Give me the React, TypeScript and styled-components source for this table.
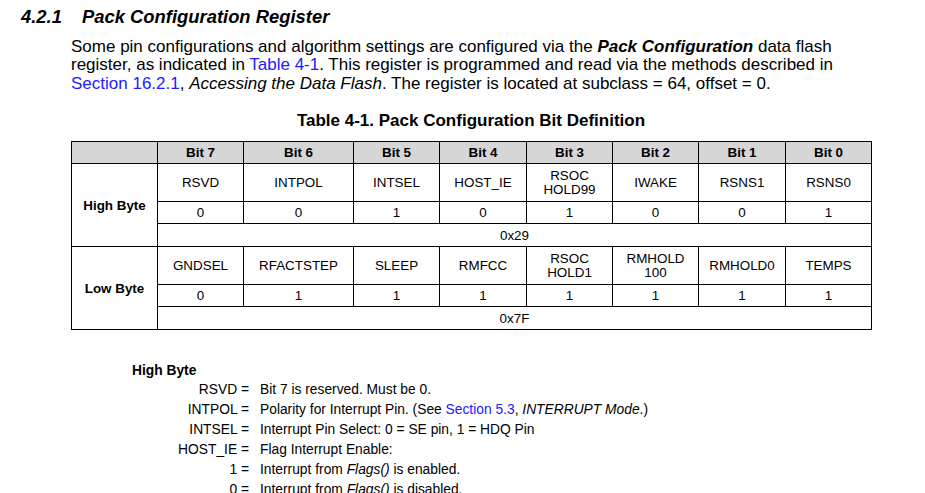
import styled, { createGlobalStyle } from 'styled-components';

const GlobalStyle = createGlobalStyle`
  body {
    margin: 0;
    background: #fff;
    color: #000;
    font-family: "Liberation Sans", Arial, sans-serif;
  }
`;

interface BitCell {
  name: string[];
  value: number;
}

interface ByteRow {
  label: string;
  bits: BitCell[];
  hex: string;
}

const bytes: ByteRow[] = [
  {
    label: 'High Byte',
    hex: '0x29',
    bits: [
      { name: ['RSVD'], value: 0 },
      { name: ['INTPOL'], value: 0 },
      { name: ['INTSEL'], value: 1 },
      { name: ['HOST_IE'], value: 0 },
      { name: ['RSOC', 'HOLD99'], value: 1 },
      { name: ['IWAKE'], value: 0 },
      { name: ['RSNS1'], value: 0 },
      { name: ['RSNS0'], value: 1 },
    ],
  },
  {
    label: 'Low Byte',
    hex: '0x7F',
    bits: [
      { name: ['GNDSEL'], value: 0 },
      { name: ['RFACTSTEP'], value: 1 },
      { name: ['SLEEP'], value: 1 },
      { name: ['RMFCC'], value: 1 },
      { name: ['RSOC', 'HOLD1'], value: 1 },
      { name: ['RMHOLD', '100'], value: 1 },
      { name: ['RMHOLD0'], value: 1 },
      { name: ['TEMPS'], value: 1 },
    ],
  },
];

const colWidths = [86, 86, 110, 86, 87, 86, 86, 87, 86];

export default function App() {
  return (
    <>
      <GlobalStyle />
      <Page>
        <Heading>
          <HeadingNum>4.2.1</HeadingNum>Pack Configuration Register
        </Heading>
        <Body>
          <Paragraph>
            Some pin configurations and algorithm settings are configured via the <BoldItalic>Pack Configuration</BoldItalic> data flash
            <br />
            register, as indicated in <Link>Table 4-1</Link>. This register is programmed and read via the methods described in
            <br />
            <Link>Section 16.2.1</Link>, <i>Accessing the Data Flash</i>. The register is located at subclass = 64, offset = 0.
          </Paragraph>
          <TableTitle>Table 4-1. Pack Configuration Bit Definition</TableTitle>
          <BitTable>
            <colgroup>
              {colWidths.map((w, i) => (
                <col key={`col_${i}`} style={{ width: w }} />
              ))}
            </colgroup>
            <thead>
              <tr>
                <HeadCell />
                {[7, 6, 5, 4, 3, 2, 1, 0].map(b => (
                  <HeadCell key={`bit_${b}`}>Bit {b}</HeadCell>
                ))}
              </tr>
            </thead>
            <tbody>
              {bytes.map(byte => (
                <ByteGroup key={byte.label} byte={byte} />
              ))}
            </tbody>
          </BitTable>

          <Defs>
            <DefsTitle>High Byte</DefsTitle>
            <DefList>
              <DefTerm>RSVD =</DefTerm>
              <DefText>Bit 7 is reserved. Must be 0.</DefText>
              <DefTerm>INTPOL =</DefTerm>
              <DefText>
                Polarity for Interrupt Pin. (See <Link>Section 5.3</Link>, <i>INTERRUPT Mode</i>.)
              </DefText>
              <DefTerm>INTSEL =</DefTerm>
              <DefText>Interrupt Pin Select: 0 = SE pin, 1 = HDQ Pin</DefText>
              <DefTerm>HOST_IE =</DefTerm>
              <DefText>Flag Interrupt Enable:</DefText>
              <DefTerm>1 =</DefTerm>
              <DefText>
                Interrupt from <i>Flags()</i> is enabled.
              </DefText>
              <DefTerm>0 =</DefTerm>
              <DefText>
                Interrupt from <i>Flags()</i> is disabled.
              </DefText>
            </DefList>
          </Defs>
        </Body>
      </Page>
    </>
  );
}

function ByteGroup({ byte }: { byte: ByteRow }) {
  return (
    <>
      <tr>
        <LabelCell rowSpan={3}>{byte.label}</LabelCell>
        {byte.bits.map((bit, i) => (
          <NameCell key={`name_${i}`}>
            {bit.name.map((line, j) => (
              <NameLine key={`line_${j}`}>{line}</NameLine>
            ))}
          </NameCell>
        ))}
      </tr>
      <tr>
        {byte.bits.map((bit, i) => (
          <ValueCell key={`val_${i}`}>{bit.value}</ValueCell>
        ))}
      </tr>
      <tr>
        <HexCell colSpan={8}>{byte.hex}</HexCell>
      </tr>
    </>
  );
}

const Page = styled.div`
  padding: 7px 0 0 21px;
  width: 925px;
  box-sizing: border-box;
`;

const Heading = styled.h2`
  margin: 0;
  font-size: 18.4px;
  line-height: 20px;
  font-weight: bold;
  font-style: italic;
  display: flex;
`;

const HeadingNum = styled.span`
  width: 61px;
`;

const Body = styled.div`
  padding-left: 50px;
`;

const Paragraph = styled.p`
  margin: 10.5px 0 0;
  font-size: 17px;
  line-height: 18.5px;
  white-space: nowrap;
`;

const BoldItalic = styled.b`
  font-style: italic;
`;

const Link = styled.span`
  color: #2020ff;
`;

const TableTitle = styled.div`
  margin: 19px 0 0;
  width: 800px;
  text-align: center;
  font-weight: bold;
  font-size: 17px;
  line-height: 18px;
`;

const BitTable = styled.table`
  margin-top: 11px;
  width: 800px;
  border-collapse: collapse;
  table-layout: fixed;
  font-size: 13.4px;

  td,
  th {
    border: 1px solid #000;
    padding: 0;
    text-align: center;
  }
`;

const HeadCell = styled.th`
  background: #d6d6d6;
  height: 21px;
  font-weight: bold;
`;

const LabelCell = styled.td`
  font-weight: bold;
`;

const NameCell = styled.td`
  height: 37px;
`;

const NameLine = styled.div`
  line-height: 13.5px;
`;

const ValueCell = styled.td`
  height: 21px;
`;

const HexCell = styled.td`
  height: 22px;
`;

const Defs = styled.div`
  margin: 32px 0 0 61px;
  font-size: 13.8px;
`;

const DefsTitle = styled.div`
  font-weight: bold;
  line-height: 18px;
`;

const DefList = styled.div`
  display: grid;
  grid-template-columns: 117px 1fr;
  column-gap: 11px;
  line-height: 20px;
`;

const DefTerm = styled.div`
  text-align: right;
  white-space: pre;
`;

const DefText = styled.div``;
